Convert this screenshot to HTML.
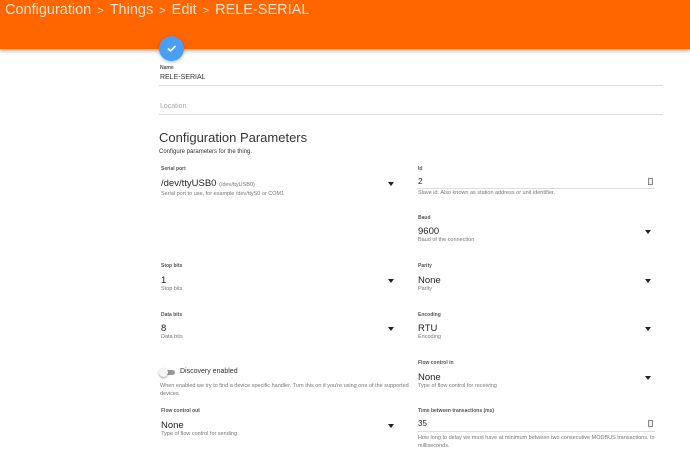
<!DOCTYPE html>
<html><head><meta charset="utf-8"><style>
*{margin:0;padding:0;box-sizing:border-box}
body{width:690px;height:447px;overflow:hidden;background:#fff;font-family:"Liberation Sans",sans-serif;position:relative;color:#333}
.hdr{position:absolute;left:0;top:0;width:690px;height:49px;background:#ff6600;box-shadow:0 2px 4px rgba(0,0,0,.3)}
.bc{position:absolute;left:5px;top:2px;color:#fde3d0;font-size:14.5px;white-space:nowrap}
.bc span{margin:0 6px;font-size:11px}
.fab{position:absolute;left:159px;top:36px;width:25px;height:25px;border-radius:50%;background:#4a9ff5;box-shadow:0 1px 3px rgba(0,0,0,.3)}
.a{position:absolute;white-space:nowrap}
.lbl{font-size:5px;color:#555;font-weight:bold}
.val{font-size:9.5px;color:#222}
.hlp{font-size:5.5px;color:#777}
.line{position:absolute;height:1px;background:#ddd}
.arr{position:absolute;width:0;height:0;border-left:3.5px solid transparent;border-right:3.5px solid transparent;border-top:4px solid #222}
.spin{position:absolute;width:5px;height:7px;border:1px solid #888;background:#eee}
</style></head><body>
<div class="hdr"><div class="bc">Configuration<span>&gt;</span>Things<span>&gt;</span>Edit<span>&gt;</span>RELE-SERIAL</div></div>
<div class="fab"><svg width="25" height="25" viewBox="0 0 25 25"><path d="M9 12.5l2.5 2.5 5-5" stroke="#fff" stroke-width="1.6" fill="none"/></svg></div>

<div class="a lbl" style="left:160px;top:65px">Name</div>
<div class="a" style="left:160px;top:74px;font-size:7px;color:#333">RELE-SERIAL</div>
<div class="line" style="left:159px;top:85px;width:504px"></div>
<div class="a" style="left:160px;top:103px;font-size:7px;color:#aaa">Location</div>
<div class="line" style="left:159px;top:114px;width:504px"></div>
<div class="a" style="left:159px;top:130px;font-size:13px;color:#333">Configuration Parameters</div>
<div class="a" style="left:159px;top:149px;font-size:6px;color:#333">Configure parameters for the thing.</div>

<div class="a lbl" style="left:161px;top:166px">Serial port</div>
<div class="a val" style="left:161px;top:178px">/dev/ttyUSB0 <span style="font-size:5.5px;color:#777">(/dev/ttyUSB0)</span></div>
<div class="arr" style="left:388px;top:182px"></div>
<div class="a hlp" style="left:161px;top:191px">Serial port to use, for example /dev/ttyS0 or COM1</div>

<div class="a lbl" style="left:418px;top:166px">Id</div>
<div class="a val" style="left:418px;top:177px;font-size:8px">2</div>
<div class="spin" style="left:648px;top:178px"></div>
<div class="line" style="left:417px;top:188px;width:238px"></div>
<div class="a hlp" style="left:418px;top:190px">Slave id. Also known as station address or unit identifier.</div>

<div class="a lbl" style="left:418px;top:215px">Baud</div>
<div class="a val" style="left:418px;top:226px">9600</div>
<div class="arr" style="left:645px;top:230px"></div>
<div class="a hlp" style="left:418px;top:237px">Baud of the connection</div>

<div class="a lbl" style="left:161px;top:263px">Stop bits</div>
<div class="a val" style="left:161px;top:275px">1</div>
<div class="arr" style="left:388px;top:279px"></div>
<div class="a hlp" style="left:161px;top:286px">Stop bits</div>
<div class="a lbl" style="left:418px;top:263px">Parity</div>
<div class="a val" style="left:418px;top:275px">None</div>
<div class="arr" style="left:645px;top:279px"></div>
<div class="a hlp" style="left:418px;top:286px">Parity</div>

<div class="a lbl" style="left:161px;top:312px">Data bits</div>
<div class="a val" style="left:161px;top:323px">8</div>
<div class="arr" style="left:388px;top:327px"></div>
<div class="a hlp" style="left:161px;top:334px">Data bits</div>
<div class="a lbl" style="left:418px;top:312px">Encoding</div>
<div class="a val" style="left:418px;top:323px">RTU</div>
<div class="arr" style="left:645px;top:327px"></div>
<div class="a hlp" style="left:418px;top:334px">Encoding</div>

<div class="a" style="left:162px;top:370px;width:13px;height:5px;border-radius:3px;background:#999"></div>
<div class="a" style="left:159px;top:368px;width:9px;height:9px;border-radius:50%;background:#f5f5f5;box-shadow:0 1px 2px rgba(0,0,0,.4)"></div>
<div class="a" style="left:180px;top:368px;font-size:7px;color:#333">Discovery enabled</div>
<div class="a hlp" style="left:160px;top:382px;line-height:8px">When enabled we try to find a device specific handler. Turn this on if you're using one of the supported<br>devices.</div>

<div class="a lbl" style="left:418px;top:360px">Flow control in</div>
<div class="a val" style="left:418px;top:372px">None</div>
<div class="arr" style="left:645px;top:376px"></div>
<div class="a hlp" style="left:418px;top:383px">Type of flow control for receiving</div>

<div class="a lbl" style="left:161px;top:408px">Flow control out</div>
<div class="a val" style="left:161px;top:420px">None</div>
<div class="arr" style="left:388px;top:424px"></div>
<div class="a hlp" style="left:161px;top:431px">Type of flow control for sending</div>

<div class="a lbl" style="left:418px;top:408px">Time between transactions (ms)</div>
<div class="a val" style="left:418px;top:419px;font-size:8px">35</div>
<div class="spin" style="left:648px;top:420px"></div>
<div class="line" style="left:417px;top:431px;width:238px"></div>
<div class="a hlp" style="left:418px;top:434px;line-height:8px">How long to delay we must have at minimum between two consecutive MODBUS transactions. In<br>milliseconds.</div>
</body></html>
